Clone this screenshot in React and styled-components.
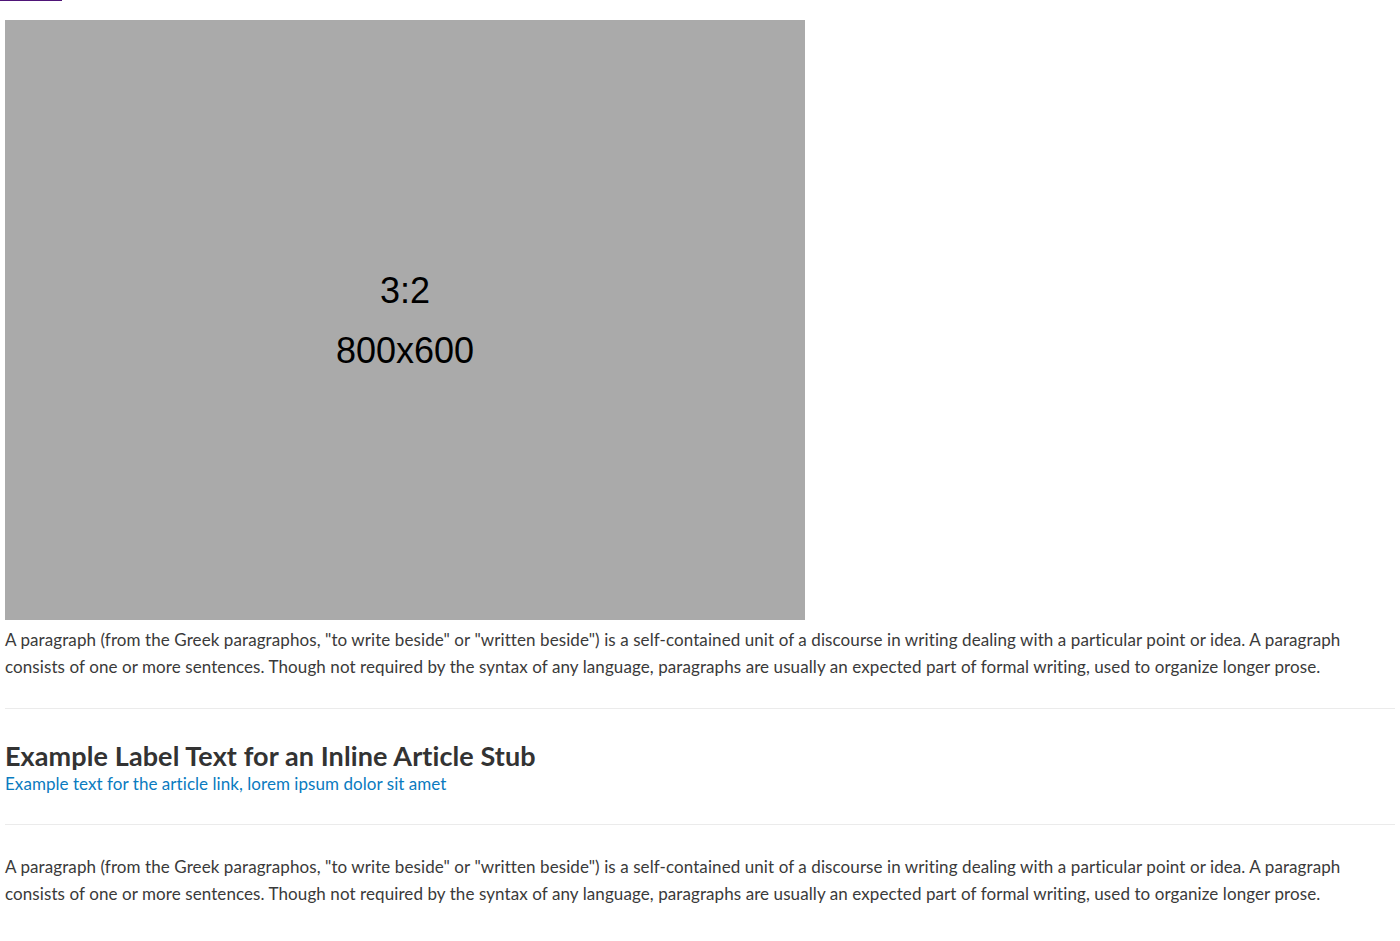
import React from "react";
import styled, { createGlobalStyle } from "styled-components";

const GlobalStyle = createGlobalStyle`
  html, body {
    margin: 0;
    padding: 0;
    background: #fff;
  }
  body {
    font-family: "Lato", "Open Sans", sans-serif;
    color: #333;
  }
`;

const Page = styled.div`
  position: relative;
  padding: 20px 5px 0;
`;

const VisitedUnderline = styled.span`
  position: absolute;
  top: 0;
  left: 0;
  width: 62px;
  height: 1px;
  background: #4f1578;
`;

const Placeholder = styled.div`
  width: 800px;
  height: 600px;
  background: #aaaaaa;
  display: flex;
  flex-direction: column;
  align-items: center;
  justify-content: center;
  gap: 18px;
  font-family: "Liberation Sans", Arial, sans-serif;
  font-size: 36px;
  color: #000;
  padding-top: 2px;
  box-sizing: border-box;
`;

const Paragraph = styled.p`
  margin: ${(p) => (p.$first ? "6px" : "28px")} 0 0;
  font-size: 17px;
  line-height: 27px;
  letter-spacing: 0.085px;
  color: #3a3a3a;
`;

const Divider = styled.hr`
  margin: ${(p) => p.$top || 27}px 0 0;
  border: 0;
  border-top: 1px solid #ebebeb;
  height: 0;
`;

const Stub = styled.div`
  padding-top: 31px;
  padding-bottom: 1px;
`;

const StubLabel = styled.h3`
  margin: 0;
  font-size: 27px;
  line-height: 32px;
  font-weight: 700;
  letter-spacing: 0.1px;
  color: #333;
`;

const StubLink = styled.a`
  display: block;
  font-size: 17px;
  line-height: 24px;
  letter-spacing: 0.05px;
  color: #0a7bc0;
  text-decoration: none;
`;

const text =
  'A paragraph (from the Greek paragraphos, "to write beside" or "written beside") is a self-contained unit of a discourse in writing dealing with a particular point or idea. A paragraph consists of one or more sentences. Though not required by the syntax of any language, paragraphs are usually an expected part of formal writing, used to organize longer prose.';

export default function App() {
  return (
    <>
      <GlobalStyle />
      <Page>
        <VisitedUnderline />
        <Placeholder>
          <span>3:2</span>
          <span>800x600</span>
        </Placeholder>
        <Paragraph $first>{text}</Paragraph>
        <Divider $top={28} />
        <Stub>
          <StubLabel>Example Label Text for an Inline Article Stub</StubLabel>
          <StubLink href="#article">
            Example text for the article link, lorem ipsum dolor sit amet
          </StubLink>
        </Stub>
        <Divider $top={27} />
        <Paragraph>{text}</Paragraph>
      </Page>
    </>
  );
}
